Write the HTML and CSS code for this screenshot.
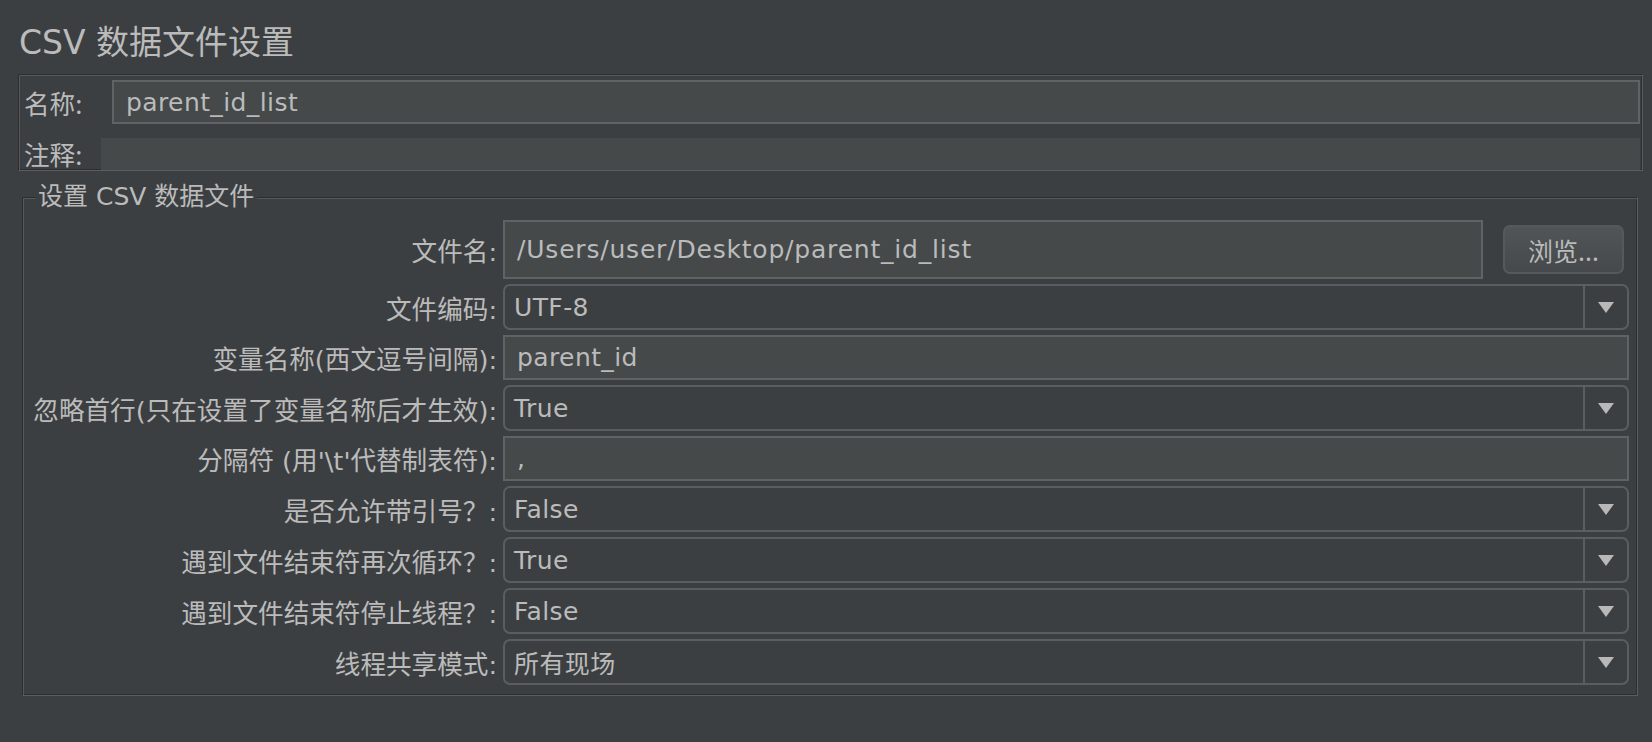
FILE: index.html
```html
<!DOCTYPE html>
<html lang="zh-CN">
<head>
<meta charset="utf-8">
<title>CSV 数据文件设置</title>
<link rel="stylesheet" href="styles.css">
</head>
<body>
<div class="app">
  <h1 class="title">CSV 数据文件设置</h1>

  <div class="named-panel">
    <div class="prow name-row">
      <span class="plabel">名称:</span>
      <div class="tf name-field">parent_id_list</div>
    </div>
    <div class="prow comment-row">
      <span class="plabel">注释:</span>
      <div class="comment-field"></div>
    </div>
  </div>

  <fieldset class="group">
    <legend class="group-title">设置 CSV 数据文件</legend>
    <div class="form">
      <label class="flabel">文件名:</label>
      <div class="file-line">
        <div class="tf file-field">/Users/user/Desktop/parent_id_list</div>
        <button class="browse" type="button">浏览...</button>
      </div>

      <label class="flabel">文件编码:</label>
      <div class="combo"><span class="combo-value">UTF-8</span><span class="combo-arrow"><i class="tri"></i></span></div>

      <label class="flabel">变量名称(西文逗号间隔):</label>
      <div class="tf field">parent_id</div>

      <label class="flabel">忽略首行(只在设置了变量名称后才生效):</label>
      <div class="combo"><span class="combo-value">True</span><span class="combo-arrow"><i class="tri"></i></span></div>

      <label class="flabel">分隔符 (用'\t'代替制表符):</label>
      <div class="tf field">,</div>

      <label class="flabel">是否允许带引号？:</label>
      <div class="combo"><span class="combo-value">False</span><span class="combo-arrow"><i class="tri"></i></span></div>

      <label class="flabel">遇到文件结束符再次循环？:</label>
      <div class="combo"><span class="combo-value">True</span><span class="combo-arrow"><i class="tri"></i></span></div>

      <label class="flabel">遇到文件结束符停止线程？:</label>
      <div class="combo"><span class="combo-value">False</span><span class="combo-arrow"><i class="tri"></i></span></div>

      <label class="flabel">线程共享模式:</label>
      <div class="combo"><span class="combo-value">所有现场</span><span class="combo-arrow"><i class="tri"></i></span></div>
    </div>
  </fieldset>
</div>
</body>
</html>
```

FILE: styles.css
```css
* { box-sizing: border-box; }

html, body {
  margin: 0;
  padding: 0;
  background: #3c3f41;
  height: 100%;
}

body {
  color: #bbbbbb;
  font-family: "DejaVu Sans", "Noto Sans CJK SC", sans-serif;
  font-size: 25px;
}

.app {
  width: 1652px;
  height: 742px;
  overflow: hidden;
  padding-top: 23px;
}

.title {
  margin: 0 0 11px 19px;
  height: 40px;
  line-height: 40px;
  font-size: 33px;
  font-weight: normal;
  font-family: "DejaVu Sans", "Noto Sans CJK SC", sans-serif;
  color: #bbbbbb;
}

/* ---------- name / comment panel ---------- */
.named-panel {
  margin: 0 9px 0 18px;
  height: 97px;
  border: 1px solid;
  border-color: #2c2e2f #5a5e60 #5a5e60 #2c2e2f;
  box-shadow: inset 1px 1px 0 #55595b, inset -1px -1px 0 #2c2e2f;
  padding: 5px 2px 1px 2px;
  display: flex;
  flex-direction: column;
  gap: 11px;
}

.prow {
  display: grid;
  grid-template-columns: 80px 1fr;
  align-items: center;
}

.plabel {
  padding-left: 3px;
  font-family: "Noto Sans CJK SC", sans-serif;
  font-size: 25.6px;
  color: #bbbbbb;
}

.name-row { height: 44px; }

.name-field {
  margin-left: 11px;
  height: 44px;
}

.comment-row { height: 32px; }

.comment-field {
  height: 32px;
  background: #45494a;
}

/* ---------- text fields ---------- */
.tf {
  background: #45494a;
  border: 2px solid #5f6364;
  display: flex;
  align-items: center;
  padding-left: 12px;
  color: #bbbbbb;
  white-space: nowrap;
  letter-spacing: 0.4px;
}

.file-field { letter-spacing: 0.8px; }

.field { height: 45px; }

/* ---------- group (titled border) ---------- */
.group {
  margin: 11px 14px 0 22px;
  padding: 8px 8px 10px 1px;
  min-width: 0;
  border: 1px solid;
  border-color: #2c2e2f #5a5e60 #5a5e60 #2c2e2f;
  box-shadow: inset 1px 1px 0 #55595b, inset -1px -1px 0 #2c2e2f;
}

.group-title {
  margin-left: 12px;
  padding: 0 3px 0 2px;
  height: 30px;
  line-height: 30px;
  font-family: "DejaVu Sans", "Noto Sans CJK SC", sans-serif;
  font-size: 25px;
  background: #3c3f41;
  color: #bbbbbb;
}

.form {
  display: grid;
  grid-template-columns: 473px 1fr;
  column-gap: 6px;
  row-gap: 5px;
  align-items: center;
}

.flabel {
  justify-self: end;
  white-space: nowrap;
  font-family: "DejaVu Sans", "Noto Sans CJK SC", sans-serif;
  font-size: 25.6px;
  color: #bbbbbb;
}

.file-line {
  display: flex;
  align-items: center;
  gap: 20px;
  padding-right: 5px;
  height: 59px;
}

.file-field {
  flex: 1;
  height: 59px;
}

.browse {
  width: 121px;
  height: 49px;
  border: 2px solid #56595b;
  border-radius: 7px;
  background: linear-gradient(#515558, #46494b);
  color: #bbbbbb;
  font-family: "Noto Sans CJK SC", sans-serif;
  font-size: 25px;
  padding: 0;
}

/* ---------- combo boxes ---------- */
.combo {
  height: 46px;
  border: 2px solid #5a5e60;
  border-radius: 7px;
  display: flex;
  align-items: stretch;
}

.combo-value {
  flex: 1;
  display: flex;
  align-items: center;
  padding-left: 9px;
  letter-spacing: 0.4px;
  white-space: nowrap;
}

.combo-arrow {
  width: 44px;
  border-left: 2px solid #5a5e60;
  display: flex;
  align-items: center;
  justify-content: center;
}

.tri {
  display: block;
  width: 0;
  height: 0;
  border-left: 8px solid transparent;
  border-right: 8px solid transparent;
  border-top: 11px solid #b8b8b8;
}
```
